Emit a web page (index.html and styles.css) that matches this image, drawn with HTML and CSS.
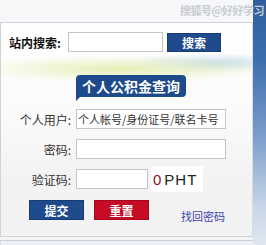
FILE: index.html
```html
<!DOCTYPE html>
<html lang="zh">
<head>
<meta charset="utf-8">
<link rel="stylesheet" href="styles.css">
</head>
<body>
<div class="page">
  <div class="main">
    <div class="top"></div>
    <div class="panel">
      <div class="search">
        <span class="slabel">站内搜索:</span>
        <div class="box sinput"></div>
        <span class="btn blue sbtn">搜索</span>
      </div>
      <div class="tab">个人公积金查询</div>
      <div class="form">
        <div class="row">
          <span class="label">个人用户:</span>
          <div class="box wide hint">个人帐号/身份证号/联名卡号</div>
        </div>
        <div class="row">
          <span class="label">密码:</span>
          <div class="box wide"></div>
        </div>
        <div class="row">
          <span class="label">验证码:</span>
          <div class="box short"></div>
          <span class="code"><span class="zero">0</span>PHT</span>
        </div>
      </div>
      <div class="actions">
        <span class="btn blue abtn">提交</span>
        <span class="btn red abtn">重置</span>
        <a class="forgot">找回密码</a>
      </div>
    </div>
    <div class="bottom"></div>
  </div>
  <div class="side"></div>
  <div class="wm">搜狐号@好好学习</div>
</div>
</body>
</html>
```

FILE: styles.css
```css
* { box-sizing: border-box; }
html, body { margin: 0; padding: 0; }
body {
  width: 266px;
  height: 245px;
  overflow: hidden;
  background: #f4f5f7;
  font-family: "Noto Sans CJK SC", "Liberation Sans", sans-serif;
  font-size: 12px;
  color: #222;
}
.page {
  position: relative;
  display: flex;
  width: 266px;
  height: 245px;
}
.main {
  width: 253px;
  display: flex;
  flex-direction: column;
}
.top {
  height: 22px;
  background: #f6f7f9;
}
.panel {
  height: 215px;
  border: 1px solid #cfd3d8;
  border-right-color: #d8dbe0;
  background:
    radial-gradient(ellipse 150px 14px at 120px 46px, rgba(226, 236, 170, 0.85), rgba(226, 236, 170, 0) 100%),
    radial-gradient(ellipse 90px 10px at 215px 40px, rgba(190, 214, 232, 0.8), rgba(190, 214, 232, 0) 100%),
    linear-gradient(#ffffff 0%, #fbfbfb 40%, #f3f3f3 70%, #f2f2f2 100%);
  padding-top: 9px;
}
.search {
  display: flex;
  align-items: center;
  height: 20px;
  padding-left: 8px;
}
.slabel {
  font-weight: bold;
  font-size: 12px;
  width: 59px;
  color: #111;
}
.box {
  height: 20px;
  background: #fff;
  border: 1px solid #c4c4c4;
}
.sinput { width: 95px; }
.btn {
  display: flex;
  align-items: center;
  justify-content: center;
  color: #fff;
  font-weight: bold;
  font-size: 12px;
  height: 19px;
}
.blue { background: #1f4b8d; border: 1px solid #173a72; }
.red { background: #c60b25; border: 1px solid #a5081d; }
.sbtn { width: 54px; margin-left: 4px; }
.tab {
  margin: 23px 0 0 75px;
  width: 110px;
  height: 22px;
  background: #1d4a8b;
  color: #fff;
  font-weight: bold;
  font-size: 14px;
  line-height: 22px;
  text-align: center;
  border-radius: 4px 4px 4px 0;
  position: relative;
}
.tab::after {
  content: "";
  position: absolute;
  left: 0;
  bottom: -4px;
  border-left: 4px solid #1d4a8b;
  border-bottom: 4px solid transparent;
}
.form {
  margin-top: 12px;
  display: flex;
  flex-direction: column;
  gap: 10px;
}
.row {
  display: flex;
  align-items: center;
  height: 20px;
}
.label {
  width: 75px;
  text-align: right;
  padding-right: 5px;
  color: #333;
}
.wide { width: 150px; }
.short { width: 72px; }
.hint {
  font-size: 11px;
  letter-spacing: 0;
  line-height: 18px;
  padding-left: 1px;
  color: #333;
  white-space: nowrap;
}
.code {
  margin-left: 3px;
  background: #fff;
  height: 26px;
  padding: 0 6px 0 2px;
  display: flex;
  align-items: center;
  font-family: "Liberation Sans", sans-serif;
  font-size: 15px;
  letter-spacing: 1px;
  color: #222;
}
.zero { color: #8a1520; margin-right: 2px; }
.actions {
  margin-top: 11px;
  display: flex;
  align-items: center;
  padding-left: 28px;
  height: 20px;
}
.abtn { width: 55px; height: 20px; }
.red.abtn { margin-left: 10px; }
.forgot {
  margin-left: 32px;
  margin-top: 12px;
  color: #3a45b0;
  font-size: 11px;
  white-space: nowrap;
}
.bottom {
  margin-top: 3px;
  flex: 1;
  border-top: 1px solid #c8d2de;
  border-left: 1px solid #d4dbe3;
  background: #eef2f6;
}
.side {
  flex: 1;
  background: linear-gradient(#2f5e9f 0%, #3e6eae 25%, #7a9ccb 55%, #c9d7e8 85%, #dfe7f0 100%);
}
.wm {
  position: absolute;
  top: 2px;
  left: 180px;
  font-size: 11px;
  font-weight: bold;
  color: #c9ccd2;
  white-space: nowrap;
  letter-spacing: -0.5px;
}
```
